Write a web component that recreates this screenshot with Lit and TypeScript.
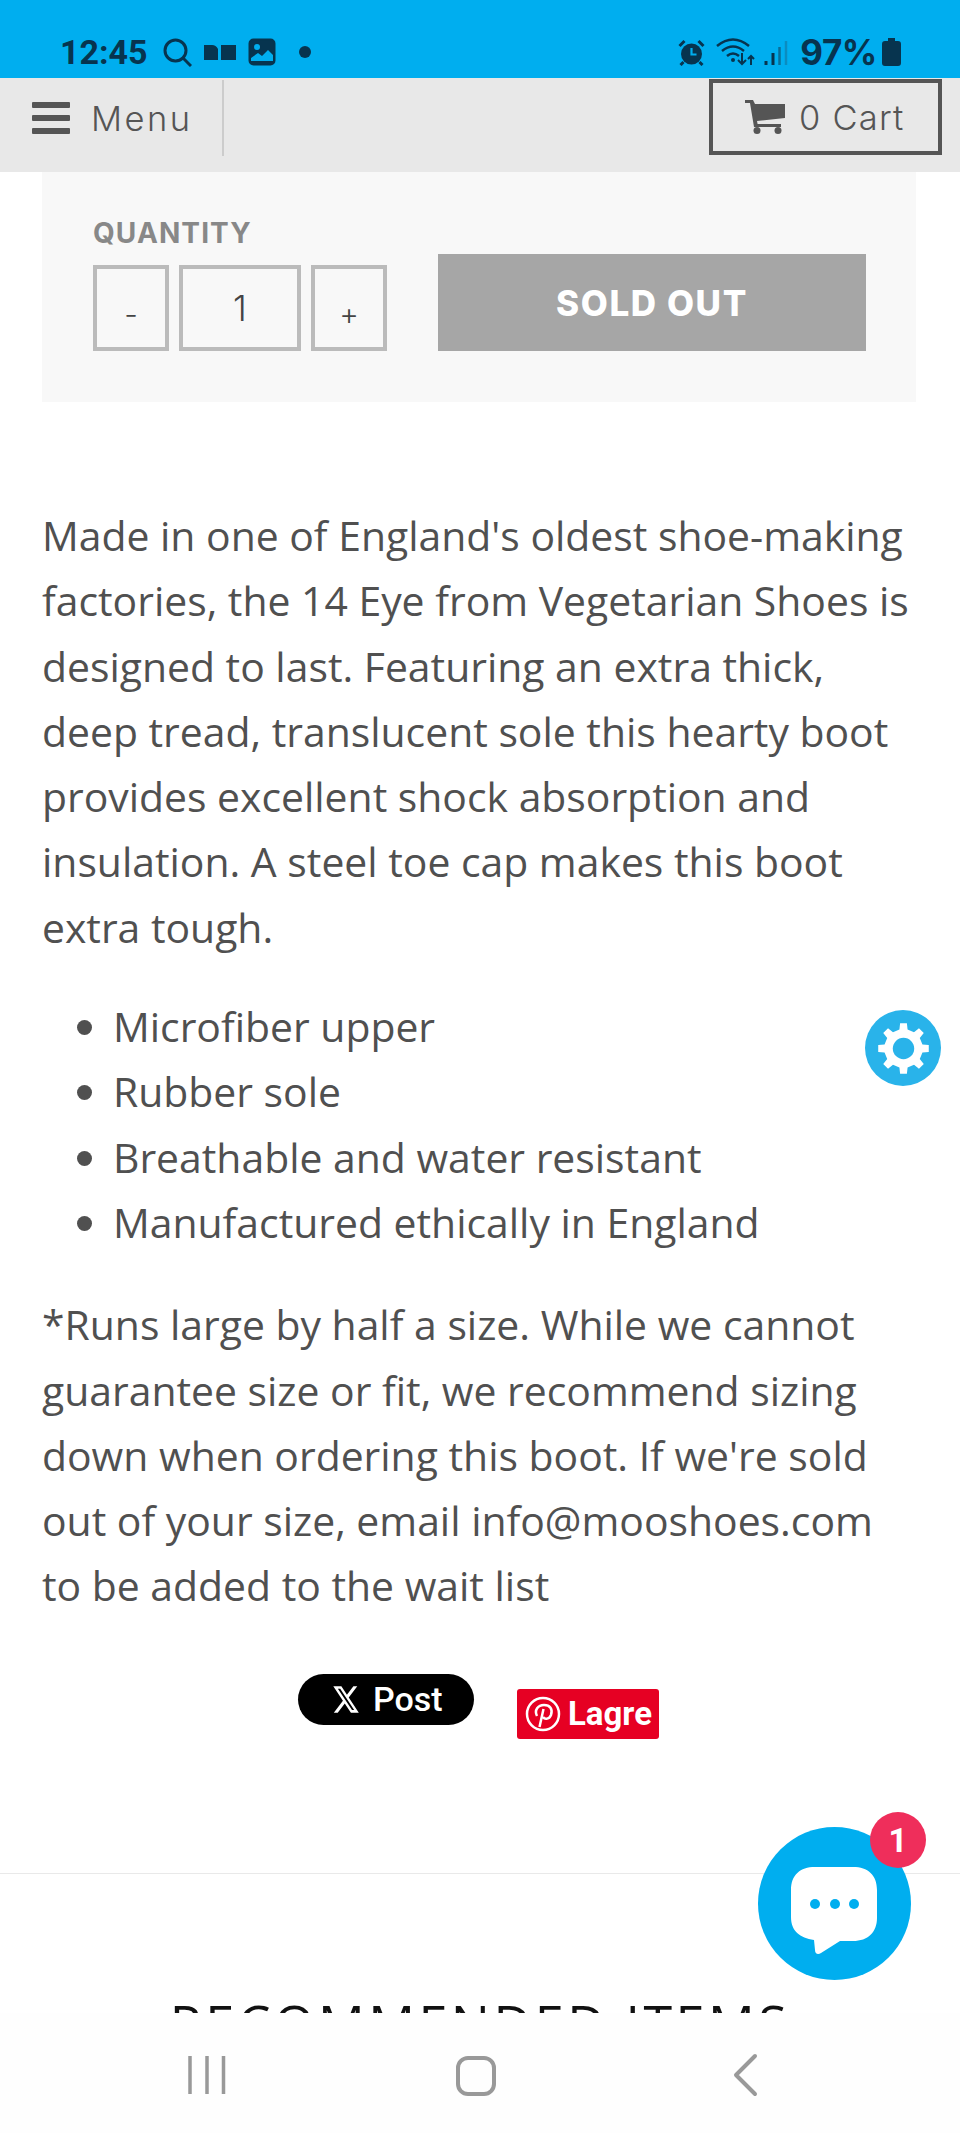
import { LitElement, html, css, svg } from "lit";
import { customElement } from "lit/decorators.js";

// gear outline built from tooth count, radii in the 0-100 box
function gearPath(teeth: number, outer: number, inner: number) {
	const pts: string[] = [];
	const step = (Math.PI * 2) / teeth;
	for (let i = 0; i < teeth; i++) {
		const a = i * step - Math.PI / 2;
		const w = step * 0.17;
		const b = step * 0.27;
		const list: [number, number][] = [
			[inner, a - b],
			[outer, a - w],
			[outer, a + w],
			[inner, a + b],
		];
		for (const [r, t] of list) {
			pts.push(`${(50 + r * Math.cos(t)).toFixed(2)} ${(50 + r * Math.sin(t)).toFixed(2)}`);
		}
	}
	return "M" + pts.join("L") + "Z";
}

const FEATURES = [
	"Microfiber upper",
	"Rubber sole",
	"Breathable and water resistant",
	"Manufactured ethically in England",
];

@customElement("app-root")
export class AppRoot extends LitElement {
	static styles = css`
	:host {
		display: flex;
		flex-direction: column;
		position: relative;
		width: 960px;
		height: 2133px;
		overflow: hidden;
		background: #fff;
		font-family: "Open Sans", sans-serif;
		color: #505050;
	}

	.status {
		flex: none;
		height: 78px;
		background: #00aeef;
		color: #07344f;
		display: flex;
		justify-content: space-between;
		align-items: flex-end;
		padding: 0 59px 10px 60px;
		box-sizing: border-box;
		font-family: Roboto, sans-serif;
		font-weight: 700;
	}
	.status-side {
		display: flex;
		align-items: center;
		height: 32px;
	}
	.time { font-size: 34px; letter-spacing: 0; margin-right: 15px; }
	.pct { font-family: Inter, sans-serif; font-size: 35px; margin: 0 5px 0 12px; letter-spacing: -0.4px; }
	.status svg { display: block; flex: none; }

	.header {
		flex: none;
		height: 94px;
		background: #e8e8e8;
		display: flex;
		justify-content: space-between;
		font-family: Inter, sans-serif;
		font-weight: 300;
		color: #555;
		font-size: 34.5px;
	}
	.menu {
		width: 224px;
		height: 76px;
		margin-top: 2px;
		box-sizing: border-box;
		border-right: 2px solid #ccc;
		display: flex;
		align-items: center;
		padding-left: 32px;
		gap: 21px;
		letter-spacing: 2.5px;
	}
	.bars {
		width: 38px;
		height: 32px;
		display: flex;
		flex-direction: column;
		justify-content: space-between;
	}
	.bars i { display: block; height: 6px; background: #555; border-radius: 1px; }
	.cart {
		width: 233px;
		height: 76px;
		margin: 1px 18px 0 0;
		box-sizing: border-box;
		border: 4px solid #555;
		display: flex;
		align-items: center;
		padding-left: 32px;
		gap: 14px;
		letter-spacing: 1.2px;
	}

	.content {
		flex: 1;
		min-height: 0;
		overflow: hidden;
		position: relative;
	}

	.panel {
		margin: 0 44px 0 42px;
		height: 230px;
		box-sizing: border-box;
		background: #f8f8f8;
		padding: 45px 50px 51px 51px;
		display: flex;
		align-items: flex-end;
		gap: 51px;
		font-family: Inter, sans-serif;
	}
	.qty-label {
		font-size: 28px;
		line-height: 32px;
		font-weight: 700;
		color: #888;
		margin-bottom: 16px;
		letter-spacing: 1.1px;
	}
	.qty { display: flex; gap: 10px; }
	.qty div {
		box-sizing: border-box;
		width: 76px;
		height: 86px;
		border: 4px solid #bbb;
		display: flex;
		align-items: center;
		justify-content: center;
		font-size: 30px;
		font-weight: 300;
		color: #444;
	}
	.qty .num { width: 122px; font-size: 35px; }
	.qty .step { padding-top: 12px; }
	.sold {
		flex: 1;
		height: 97px;
		background: #a6a6a6;
		color: #fff;
		font-size: 35px;
		font-weight: 800;
		letter-spacing: 1.6px;
		display: flex;
		align-items: center;
		justify-content: center;
	}

	.copy {
		margin: 0 42px;
		font-size: 40.88px;
		line-height: 65.3px;
	}
	.copy p { margin: 0; }
	.intro { padding-top: 101px; }
	.copy ul { margin: 34px 0 37px; padding: 0 0 0 71px; }

	.share {
		display: flex;
		align-items: flex-start;
		margin: 55px 0 0 298px;
		gap: 43px;
		color: #fff;
		font-family: Roboto, sans-serif;
		font-weight: 500;
	}
	.share > div { display: flex; align-items: center; box-sizing: border-box; }
	.post {
		width: 176px;
		height: 51px;
		background: #000;
		border-radius: 26px;
		font-size: 34px;
		padding-left: 35px;
		gap: 14px;
	}
	.pin {
		width: 142px;
		height: 50px;
		margin-top: 15px;
		background: #e60023;
		border-radius: 3px;
		font-size: 33px;
		font-weight: 700;
		padding-left: 8px;
		gap: 7px;
	}

	.rule {
		margin-top: 134px;
		height: 1px;
		background: #e9e9e9;
	}
	.heading {
		margin-top: 119px;
		text-align: center;
		font-size: 52px;
		line-height: 60px;
		color: #111;
		letter-spacing: 3.5px;
		white-space: nowrap;
	}

	.navbar {
		flex: none;
		height: 120px;
		background: #fefefe;
		position: relative;
	}
	.navbar svg { position: absolute; top: 0; left: 0; }

	.gear {
		position: absolute;
		left: 865px;
		top: 1010px;
		width: 76px;
		height: 76px;
		border-radius: 50%;
		background: #29b3ea;
		display: flex;
		align-items: center;
		justify-content: center;
	}
	.chat {
		position: absolute;
		left: 758px;
		top: 1827px;
		width: 153px;
		height: 153px;
		border-radius: 50%;
		background: #00aeef;
	}
	.chat svg { position: absolute; left: 33px; top: 40px; }
	.badge {
		position: absolute;
		left: 870px;
		top: 1812px;
		width: 56px;
		height: 56px;
		border-radius: 50%;
		background: #ef2e5b;
		color: #fff;
		font-family: Roboto, sans-serif;
		font-weight: 700;
		font-size: 33px;
		display: flex;
		align-items: center;
		justify-content: center;
	}
	`;

	render() {
		return html`
<div class="status">
	<div class="status-side">
		<span class="time">12:45</span>
		<svg width="29" height="29" viewBox="0 0 29 29" fill="none" stroke="#07344f" stroke-width="3"><circle cx="12.500" cy="12.500" r="10.500"/><path d="M20 20l8 8"/></svg>
		<svg style="margin-left:12px" width="32" height="16" viewBox="0 0 32 16" fill="#07344f"><path d="M0 1h8q4 0 6 4v11H0zM17 1h15v15H17z"/></svg>
		<svg style="margin-left:12px" width="28" height="28" viewBox="0 0 28 28"><rect x="1.500" y="1.500" width="25" height="25" rx="4" fill="#07344f" stroke="#07344f" stroke-width="2"/><circle cx="9" cy="9" r="3" fill="#00aeef"/><path d="M3 20l7-5 4 3 6-6 5 5v6H3z" fill="#00aeef"/><path d="M4 25h20" stroke="#07344f" stroke-width="3"/></svg>
		<svg style="margin-left:23px" width="12" height="12"><circle cx="6" cy="6" r="6" fill="#07344f"/></svg>
	</div>
	<div class="status-side">
		<svg width="27" height="27" viewBox="0 0 26 27"><circle cx="13" cy="15" r="10.500" fill="#07344f"/><path d="M13 9v6.500h5" fill="none" stroke="#00aeef" stroke-width="2.200"/><path d="M1 7l5-5M25 7l-5-5M5 23l-3 3M21 23l3 3" stroke="#07344f" stroke-width="3"/></svg>
		<svg style="margin-left:11px" width="40" height="28" viewBox="0 0 40 28" fill="none" stroke="#07344f" stroke-width="2.500"><path d="M1 8q16-13 32 0M6 13q11-9 22 0M11 18q6-5 12 0"/><circle cx="17" cy="22" r="2" fill="#07344f" stroke="none"/><path d="M26 15v11M22 22l4 4 4-4M35 27v-9M32 21l3-3 3 3" stroke-width="2"/></svg>
		<svg style="margin-left:8px" width="24" height="26" viewBox="0 0 24 26"><path d="M2 22v4M9 14v12" stroke="#07344f" stroke-width="3"/><path d="M15.500 8v18" stroke="#0a6c96" stroke-width="2.500"/><path d="M22 2v24" stroke="#0b8cc0" stroke-width="2.500"/></svg>
		<span class="pct">97%</span>
		<svg width="19" height="28" viewBox="0 0 19 28" fill="#07344f"><path d="M6 0h7v3h3q3 0 3 3v19q0 3-3 3H3q-3 0-3-3V6q0-3 3-3h3z"/></svg>
	</div>
</div>

<div class="header">
	<div class="menu">
		<div class="bars"><i></i><i></i><i></i></div>
		<span>Menu</span>
	</div>
	<div class="cart">
		<svg width="40" height="34" viewBox="0 0 40 34" fill="#555"><path d="M0 0h8l2 4h30v14L12 21l.6 3H36v3H9L5 3H0z"/><circle cx="12" cy="30.500" r="3.500"/><circle cx="33" cy="30.500" r="3.500"/></svg>
		<span>0 Cart</span>
	</div>
</div>

<div class="content">
	<div class="panel">
		<div>
			<div class="qty-label">QUANTITY</div>
			<div class="qty">
				<div class="step">-</div>
				<div class="num">1</div>
				<div class="step">+</div>
			</div>
		</div>
		<div class="sold">SOLD OUT</div>
	</div>

	<div class="copy">
		<p class="intro">Made in one of England's oldest shoe-making factories, the 14 Eye from Vegetarian Shoes is designed to last. Featuring an extra thick, deep tread, translucent sole this hearty boot provides excellent shock absorption and insulation. A steel toe cap makes this boot extra tough.</p>
		<ul>${FEATURES.map((f) => html`<li>${f}</li>`)}</ul>
		<p>*Runs large by half a size. While we cannot guarantee size or fit, we recommend sizing down when ordering this boot. If we're sold out of your size, email info@mooshoes.com to be added to the wait list</p>
	</div>

	<div class="share">
		<div class="post">
			<svg width="26" height="27" viewBox="1 2 22 20" preserveAspectRatio="none" fill="#fff"><path d="M18.244 2.250h3.308l-7.227 8.260 8.502 11.240H16.170l-5.214-6.817L4.990 21.750H1.680l7.730-8.835L1.254 2.250H8.080l4.713 6.231zm-1.161 17.520h1.833L7.084 4.126H5.117z"/></svg>
			<span>Post</span>
		</div>
		<div class="pin">
			<svg width="36" height="36" viewBox="0 0 36 36" fill="none" stroke="#fff" stroke-width="2.500"><circle cx="18" cy="18" r="16"/><path d="M12 20c-3-6 1-11 7-11s9 4 7 10c-1.500 4-6 5-8 2M18.500 13l-4 18"/></svg>
			<span>Lagre</span>
		</div>
	</div>

	<div class="rule"></div>
	<div class="heading">RECOMMENDED ITEMS</div>
</div>

<div class="navbar">
	<svg width="960" height="120" fill="none" stroke="#999">
		<path d="M190 43v38M207 43v38M223.500 43v38" stroke-width="3.500"/>
		<rect x="458" y="45" width="36" height="36" rx="10" stroke-width="4"/>
		<path d="M755 43l-19 19 19 19" stroke-width="4" stroke-linecap="round" stroke-linejoin="round"/>
	</svg>
</div>

<div class="gear">
	<svg width="51" height="51" viewBox="0 0 100 100"><path fill="#fff" d="${gearPath(8, 50, 38)}"/>${svg`<circle cx="50" cy="50" r="21" fill="#29b3ea"/>`}</svg>
</div>

<div class="chat">
	<svg width="86" height="88" viewBox="0 0 86 88">
		<path fill="#fff" d="M24 0h38c15 0 24 8 24 23v28c0 14-9 23-24 23H49L30 86c-3 2-6 1-6-3l-1-10C9 71 0 64 0 50V23C0 8 9 0 24 0z"/>
		<circle cx="24" cy="37" r="5" fill="#00aeef"/><circle cx="44" cy="37" r="5" fill="#00aeef"/><circle cx="63" cy="37" r="5" fill="#00aeef"/>
	</svg>
</div>
<div class="badge">1</div>
		`;
	}
}

declare global {
	interface HTMLElementTagNameMap {
		"app-root": AppRoot;
	}
}
